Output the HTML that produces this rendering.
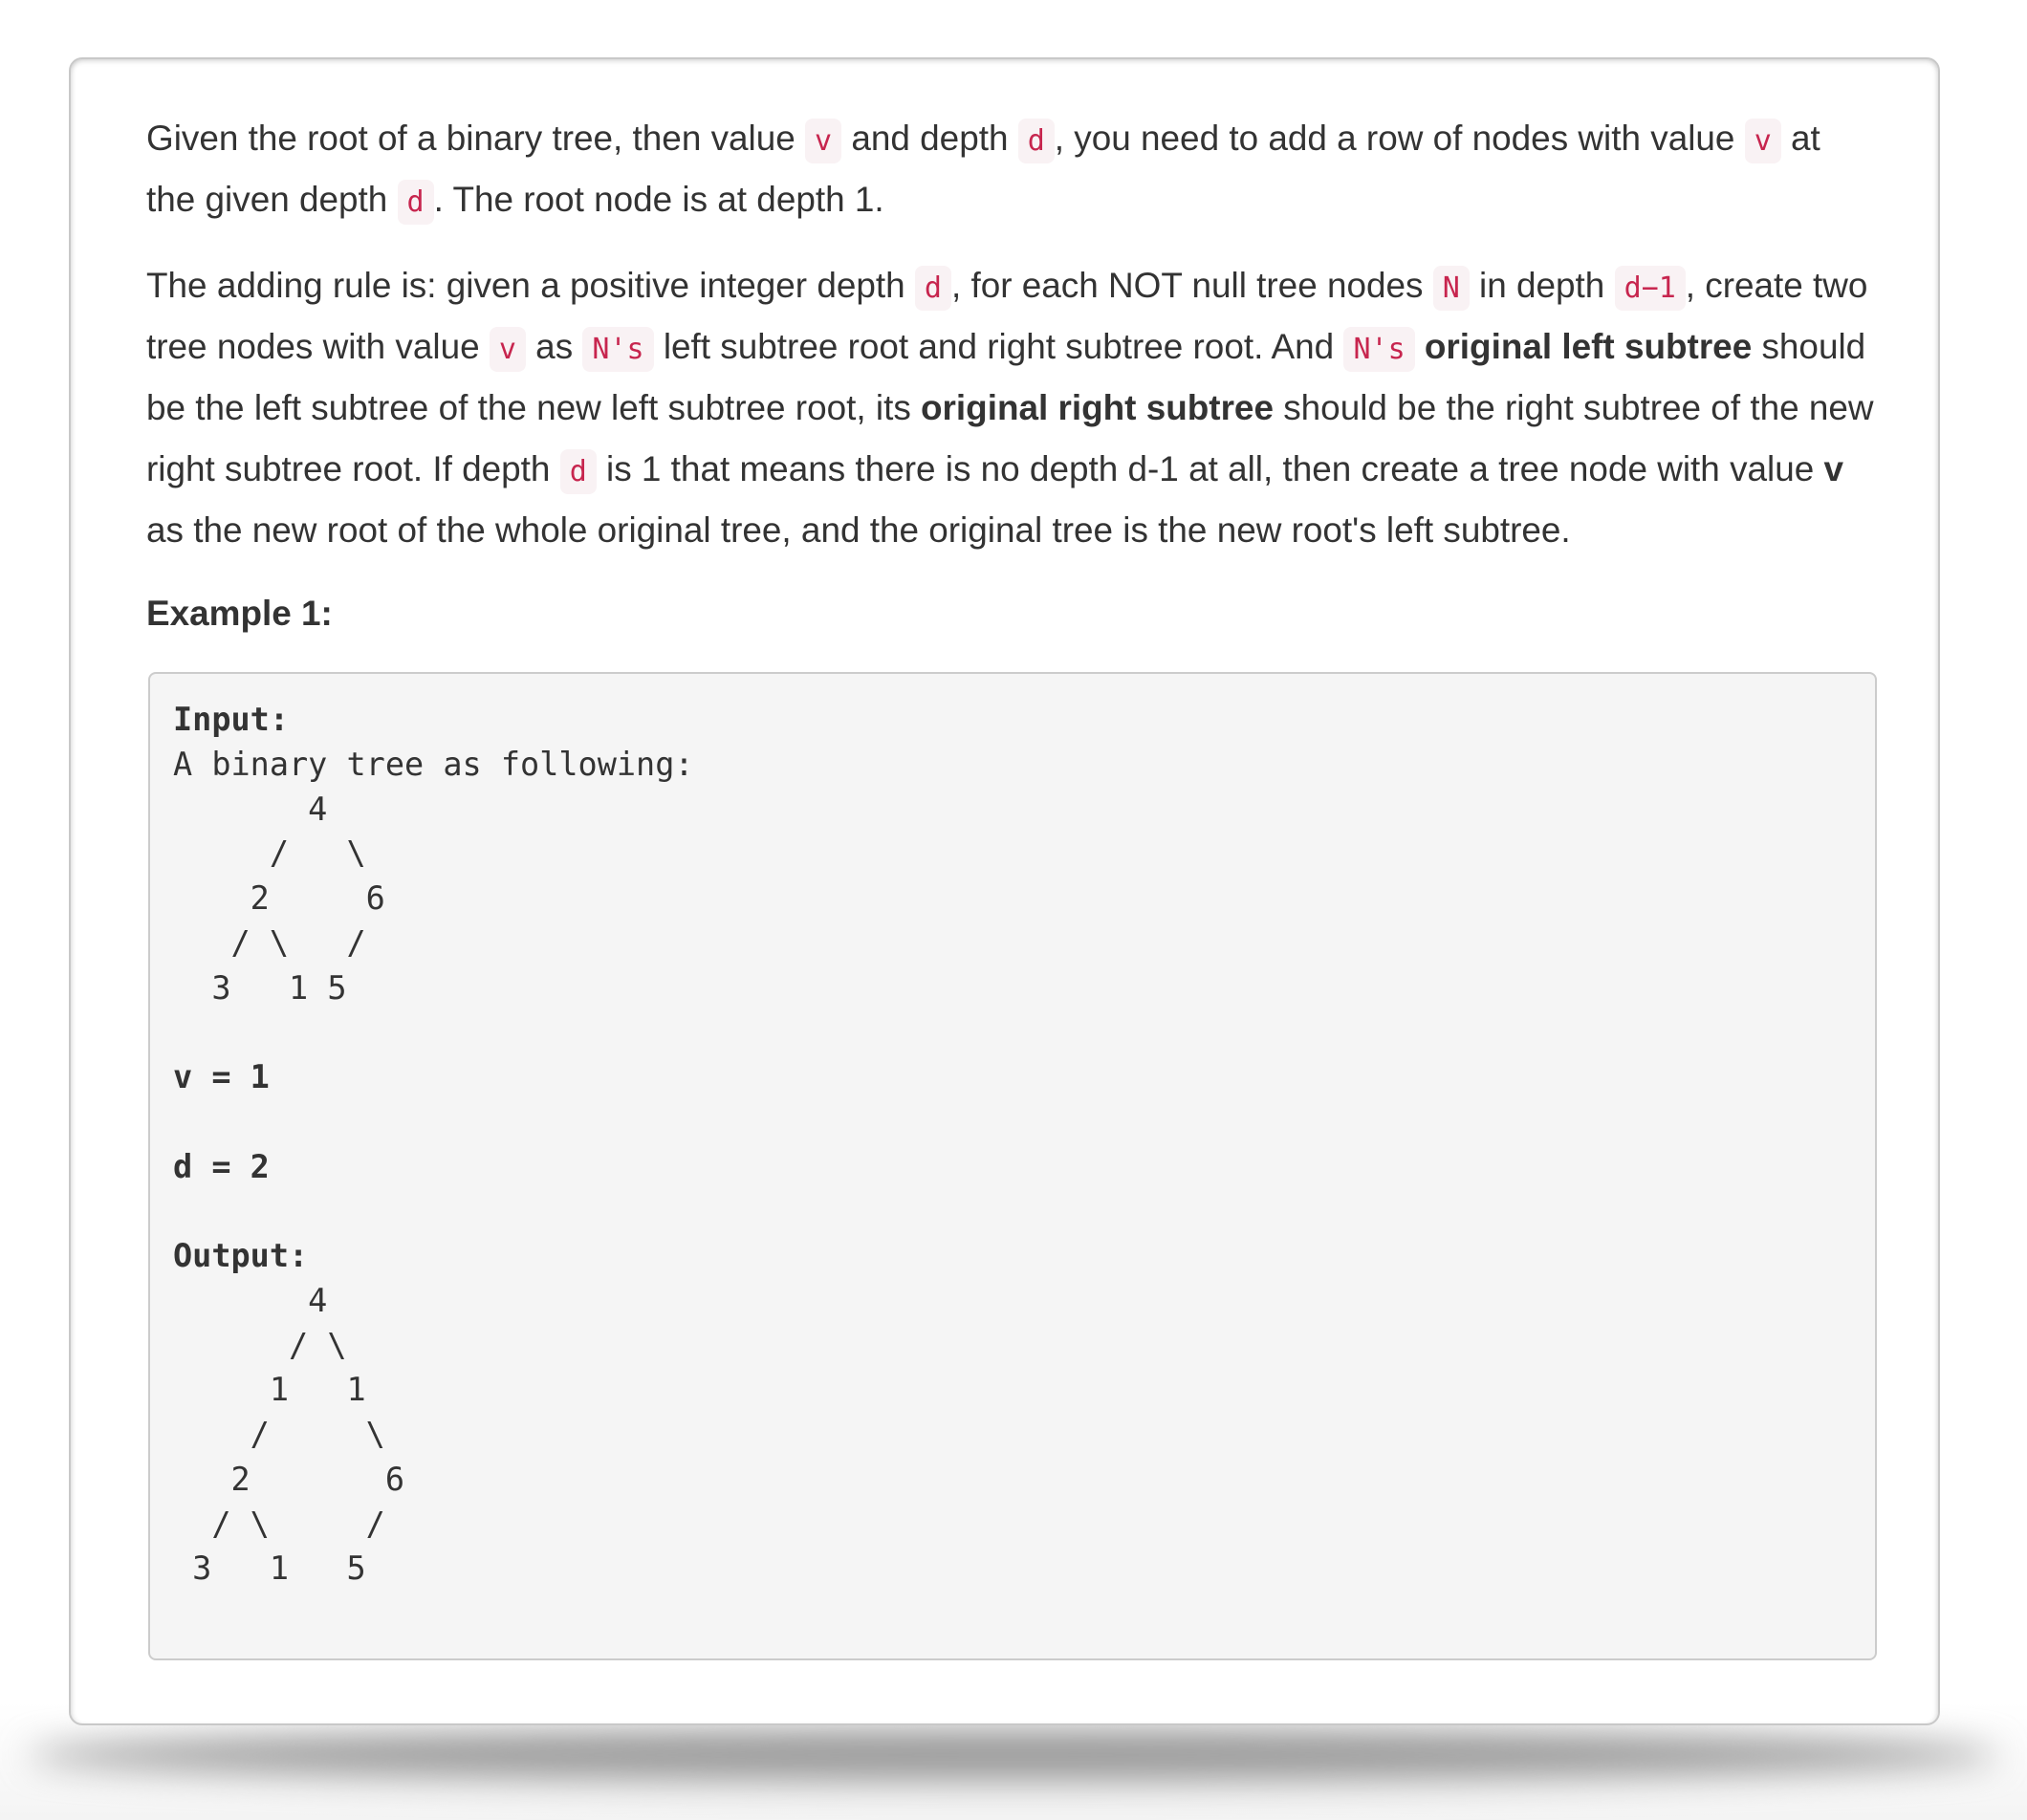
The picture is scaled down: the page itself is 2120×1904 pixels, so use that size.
<!DOCTYPE html>
<html><head><meta charset="utf-8"><style>
html,body{margin:0;padding:0;background:#fff;width:2120px;height:1904px;overflow:hidden;position:relative}
.bg{position:absolute;left:0;top:1780px;width:2120px;height:124px;background:linear-gradient(#fff,#f4f4f4)}
.sh{position:absolute;left:30px;width:2060px;top:1808px;height:56px;background:#9a9a9a;border-radius:50%;filter:blur(18px)}
.card{position:absolute;left:72px;top:60px;width:1953px;height:1741px;background:#fff;border:2px solid #c8c8c8;border-radius:14px;box-shadow:inset 0 4px 6px -2px rgba(0,0,0,.15),inset 4px 0 6px -3px rgba(0,0,0,.12),inset -4px 0 6px -3px rgba(0,0,0,.12)}
.t{position:absolute;left:153px;font-family:"Liberation Sans",Helvetica,sans-serif;font-size:36.9px;color:#333;white-space:nowrap;line-height:64px}
code{font-family:"DejaVu Sans Mono","Liberation Mono",monospace;font-size:30px;color:#c7254e;background:#f9f2f4;border-radius:8px;padding:6px 10px}
b{font-weight:bold}
.pre{position:absolute;left:155px;top:703px;width:1808px;height:1034px;background:#f5f5f5;border:2px solid #ccc;border-radius:8px;box-sizing:border-box}
.pre pre{margin:0;position:absolute;left:24px;top:25px;font-family:"DejaVu Sans Mono","Liberation Mono",monospace;font-size:33.5px;line-height:46.75px;color:#333}
</style></head><body>
<div class="bg"></div>
<div class="sh"></div>
<div class="card"></div>
<div class="t" style="top:113px">Given the root of a binary tree, then value <code>v</code> and depth <code>d</code>, you need to add a row of nodes with value <code>v</code> at</div>
<div class="t" style="top:177px">the given depth <code>d</code>. The root node is at depth 1.</div>
<div class="t" style="top:267px">The adding rule is: given a positive integer depth <code>d</code>, for each NOT null tree nodes <code>N</code> in depth <code>d−1</code>, create two</div>
<div class="t" style="top:331px">tree nodes with value <code>v</code> as <code>N's</code> left subtree root and right subtree root. And <code>N's</code> <b>original left subtree</b> should</div>
<div class="t" style="top:395px">be the left subtree of the new left subtree root, its <b>original right subtree</b> should be the right subtree of the new</div>
<div class="t" style="top:459px">right subtree root. If depth <code>d</code> is 1 that means there is no depth d-1 at all, then create a tree node with value <b>v</b></div>
<div class="t" style="top:523px">as the new root of the whole original tree, and the original tree is the new root's left subtree.</div>
<div class="t" style="top:610px"><b>Example 1:</b></div>
<div class="pre"><pre><b>Input:</b>
A binary tree as following:
       4
     /   \
    2     6
   / \   /
  3   1 5

<b>v = 1</b>

<b>d = 2</b>

<b>Output:</b>
       4
      / \
     1   1
    /     \
   2       6
  / \     /
 3   1   5
</pre></div>
</body></html>
